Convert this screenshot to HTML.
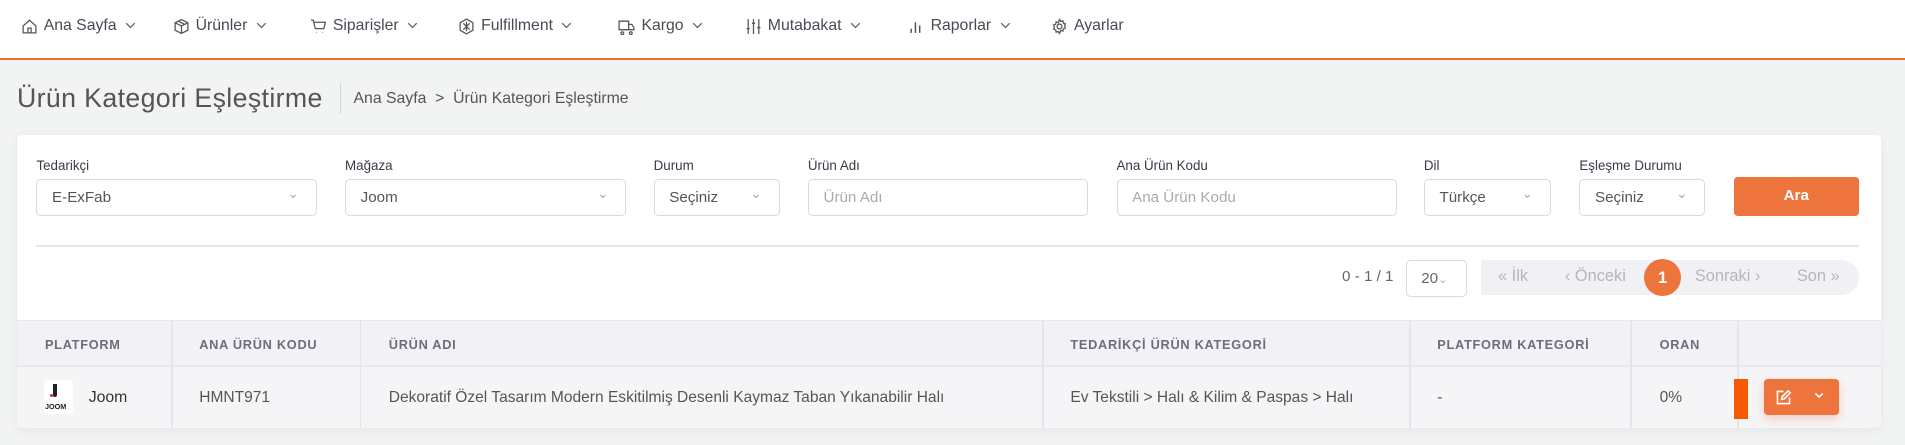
<!DOCTYPE html>
<html><head><meta charset="utf-8"><style>
html,body{margin:0;padding:0}
body{width:1568px;height:366px;zoom:1.21492;overflow:hidden;font-family:"Liberation Sans",sans-serif;background:#f2f3f3;position:relative;color:#555}
.a{position:absolute}
.nav{left:0;top:0;width:1568px;height:48px;background:#fff;border-bottom:2px solid #ec6a33}
.ni{position:absolute;top:14px;font-size:13px;color:#4a4a55;display:flex;align-items:center;gap:5px;white-space:nowrap}
.ni svg{width:14px;height:14px}
.ni svg.cv{width:9px;height:6px;margin-left:2px}
.card{left:14px;top:111px;width:1534px;height:241px;background:#fff;border-radius:4px;box-shadow:0 2px 8px rgba(0,0,0,.06);overflow:hidden}
.lb{font-size:11px;color:#3a3a48;top:130px}
.in{top:147px;height:29px;border:1px solid #d9d9e0;border-radius:4px;background:#fff;font-size:12.5px;color:#555;line-height:29px;box-sizing:content-box}
.in span{margin-left:12px}
.ph{color:#aaa}
.dd:after{content:"⌄";position:absolute;right:14px;top:-3px;font-size:11px;color:#aaa}
.th{font-size:10.5px;font-weight:bold;letter-spacing:.6px;color:#6c6c7c;top:277px}
.td{font-size:12.8px;color:#555;top:320px}
.vl{width:1px;background:#e4e4ec;top:263px;height:89px}
</style></head><body>
<div class="a nav"></div>
<div class="ni" style="left:17px"><svg viewBox="0 0 16 16" fill="none" stroke="#555" stroke-width="1.2"><path d="M2 7.5L8 2l6 5.5V14H2z M6.5 14V9.5h3V14"/></svg>Ana Sayfa<svg class="cv" viewBox="0 0 9 6" fill="none" stroke="#666" stroke-width="1.1"><path d="M1 1l3.5 3.5L8 1"/></svg></div>
<div class="ni" style="left:142px"><svg viewBox="0 0 16 16" fill="none" stroke="#555" stroke-width="1.2"><path d="M8 1.5l6 3v7l-6 3-6-3v-7z M2 4.5l6 3 6-3 M8 7.5v7 M5 3l6 3"/></svg>Ürünler<svg class="cv" viewBox="0 0 9 6" fill="none" stroke="#666" stroke-width="1.1"><path d="M1 1l3.5 3.5L8 1"/></svg></div>
<div class="ni" style="left:255px"><svg viewBox="0 0 16 16" fill="none" stroke="#555" stroke-width="1.2"><path d="M1 2h2l2 8h8l1.5-6H4 M6 13.5h.5 M11.5 13.5h.5"/></svg>Siparişler<svg class="cv" viewBox="0 0 9 6" fill="none" stroke="#666" stroke-width="1.1"><path d="M1 1l3.5 3.5L8 1"/></svg></div>
<div class="ni" style="left:377px"><svg viewBox="0 0 16 16" fill="none" stroke="#555" stroke-width="1.2"><path d="M8 1l6 3.5v7L8 15l-6-3.5v-7z M5 5l6 6 M11 5l-6 6 M8 3.5v9"/></svg>Fulfillment<svg class="cv" viewBox="0 0 9 6" fill="none" stroke="#666" stroke-width="1.1"><path d="M1 1l3.5 3.5L8 1"/></svg></div>
<div class="ni" style="left:509px"><svg viewBox="0 0 16 16" fill="none" stroke="#555" stroke-width="1.2"><path d="M1 3h9v8H1z M10 6h3l2 3v2h-5 M4 13a1.3 1.3 0 1 0 .1 0 M12 13a1.3 1.3 0 1 0 .1 0"/></svg>Kargo<svg class="cv" viewBox="0 0 9 6" fill="none" stroke="#666" stroke-width="1.1"><path d="M1 1l3.5 3.5L8 1"/></svg></div>
<div class="ni" style="left:613px"><svg viewBox="0 0 16 16" fill="none" stroke="#555" stroke-width="1.2"><path d="M3 1v14 M8 1v14 M13 1v14 M1.5 10h3 M6.5 5h3 M11.5 9h3"/></svg>Mutabakat<svg class="cv" viewBox="0 0 9 6" fill="none" stroke="#666" stroke-width="1.1"><path d="M1 1l3.5 3.5L8 1"/></svg></div>
<div class="ni" style="left:747px"><svg viewBox="0 0 16 16" fill="none" stroke="#555" stroke-width="1.4"><path d="M3 14v-4 M7 14V4 M11 14V7"/></svg>Raporlar<svg class="cv" viewBox="0 0 9 6" fill="none" stroke="#666" stroke-width="1.1"><path d="M1 1l3.5 3.5L8 1"/></svg></div>
<div class="ni" style="left:865px"><svg viewBox="0 0 16 16" fill="none" stroke="#555" stroke-width="1.2"><circle cx="8" cy="8" r="2.3"/><path d="M8 1.5l1.2 1.8 2-.6.4 2.1 2 .8-.9 1.9.9 1.9-2 .8-.4 2.1-2-.6L8 14.5l-1.2-1.8-2 .6-.4-2.1-2-.8.9-1.9-.9-1.9 2-.8.4-2.1 2 .6z"/></svg>Ayarlar</div>

<div class="a" style="left:14px;top:68px;font-size:22px;letter-spacing:.3px;color:#555">Ürün Kategori Eşleştirme</div>
<div class="a" style="left:280px;top:68px;width:1px;height:26px;background:#d5d5d5"></div>
<div class="a" style="left:291px;top:74px;font-size:13px;color:#555">Ana Sayfa &nbsp;&gt;&nbsp; Ürün Kategori Eşleştirme</div>

<div class="a card"></div>
<div class="a lb" style="left:30px">Tedarikçi</div>
<div class="a lb" style="left:284px">Mağaza</div>
<div class="a lb" style="left:538px">Durum</div>
<div class="a lb" style="left:665px">Ürün Adı</div>
<div class="a lb" style="left:919px">Ana Ürün Kodu</div>
<div class="a lb" style="left:1172px">Dil</div>
<div class="a lb" style="left:1300px">Eşleşme Durumu</div>
<div class="a in dd" style="left:30px;width:229px"><span>E-ExFab</span></div>
<div class="a in dd" style="left:284px;width:230px"><span>Joom</span></div>
<div class="a in dd" style="left:538px;width:102px"><span>Seçiniz</span></div>
<div class="a in" style="left:665px;width:229px"><span class="ph">Ürün Adı</span></div>
<div class="a in" style="left:919px;width:229px"><span class="ph">Ana Ürün Kodu</span></div>
<div class="a in dd" style="left:1172px;width:103px"><span>Türkçe</span></div>
<div class="a in dd" style="left:1300px;width:102px"><span>Seçiniz</span></div>
<div class="a" style="left:1427px;top:146px;width:103px;height:32px;background:#ee743d;border-radius:3px;color:#fff;font-size:12.5px;font-weight:bold;text-align:center;line-height:32px">Ara</div>
<div class="a" style="left:30px;top:202px;width:1500px;height:1px;background:#e6e6ea"></div>

<div class="a" style="left:1100px;top:221px;font-size:12.5px;color:#666;width:47px;text-align:right">0 - 1 / 1</div>
<div class="a" style="left:1157px;top:214px;width:49px;height:29px;border:1px solid #d9d9e0;border-radius:4px;font-size:12.5px;color:#666;line-height:29px"><span style="margin-left:12px">20</span><span style="font-size:9px;color:#aaa">⌄</span></div>
<div class="a" style="left:1219px;top:214px;width:311px;height:29px;background:#f0f0f5;border-radius:0 15px 15px 0"></div>
<div class="a" style="left:1233px;top:220px;font-size:13.5px;color:#b5b5c0">« İlk</div>
<div class="a" style="left:1288px;top:220px;font-size:13.5px;color:#b5b5c0">‹ Önceki</div>
<div class="a" style="left:1353px;top:213px;width:31px;height:31px;border-radius:50%;background:#ee743d;color:#fff;font-size:14px;font-weight:bold;text-align:center;line-height:31px">1</div>
<div class="a" style="left:1395px;top:220px;font-size:13.5px;color:#b5b5c0">Sonraki ›</div>
<div class="a" style="left:1479px;top:220px;font-size:13.5px;color:#b5b5c0">Son »</div>

<div class="a" style="left:14px;top:263px;width:1534px;height:39px;background:#f2f2f6;border-top:1px solid #e6e6ee;border-bottom:2px solid #e6e6ee;box-sizing:border-box"></div>
<div class="a" style="left:14px;top:302px;width:1534px;height:50px;background:#f5f5f8;border-radius:0 0 4px 4px"></div>
<div class="a vl" style="left:141px"></div>
<div class="a vl" style="left:296px"></div>
<div class="a vl" style="left:858px"></div>
<div class="a vl" style="left:1160px"></div>
<div class="a vl" style="left:1342px"></div>
<div class="a vl" style="left:1430px"></div>
<div class="a th" style="left:37px">PLATFORM</div>
<div class="a th" style="left:164px">ANA ÜRÜN KODU</div>
<div class="a th" style="left:320px">ÜRÜN ADI</div>
<div class="a th" style="left:881px">TEDARİKÇİ ÜRÜN KATEGORİ</div>
<div class="a th" style="left:1183px">PLATFORM KATEGORİ</div>
<div class="a th" style="left:1366px">ORAN</div>

<div class="a" style="left:36px;top:313px;width:24px;height:28px;background:#fff;border-radius:3px"></div>
<div class="a" style="left:44px;top:316px;width:3px;height:11px;background:#222;border-radius:0 0 2px 2px"></div>
<div class="a" style="left:41px;top:324px;width:3px;height:3px;background:#e22;border-radius:50%"></div>
<div class="a" style="left:37px;top:331px;font-size:6px;font-weight:bold;color:#222">JOOM</div>
<div class="a td" style="left:73px;color:#333;font-size:13px">Joom</div>
<div class="a td" style="left:164px">HMNT971</div>
<div class="a td" style="left:320px">Dekoratif Özel Tasarım Modern Eskitilmiş Desenli Kaymaz Taban Yıkanabilir Halı</div>
<div class="a td" style="left:881px">Ev Tekstili &gt; Halı &amp; Kilim &amp; Paspas &gt; Halı</div>
<div class="a td" style="left:1183px">-</div>
<div class="a td" style="left:1366px">0%</div>
<div class="a" style="left:1427px;top:312px;width:12px;height:33px;background:#f55a00"></div>
<div class="a" style="left:1452px;top:312px;width:62px;height:30px;background:#ee743d;border-radius:3px;box-shadow:0 3px 8px rgba(238,116,61,.3)"></div>
<svg class="a" style="left:1461px;top:320px" width="14" height="14" viewBox="0 0 14 14" fill="none" stroke="#fff" stroke-width="1.3"><path d="M7 2H2v10h10V7 M5.5 8.5l.3-2 5-5 1.7 1.7-5 5z"/></svg>
<svg class="a" style="left:1492px;top:322px" width="10" height="8" viewBox="0 0 10 8" fill="none" stroke="#fff" stroke-width="1.3"><path d="M2 2l3 3 3-3"/></svg>
</body></html>
